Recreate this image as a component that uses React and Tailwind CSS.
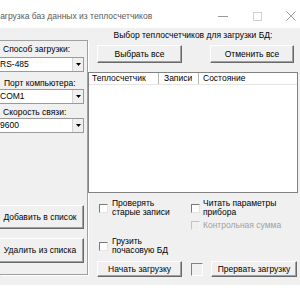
import React from "react";

const btn =
  "flex items-center justify-center bg-[#f0f0f0] border border-t-white border-l-white border-r-[#696969] border-b-[#696969] shadow-[inset_-1px_-1px_0_#a0a0a0] text-black";

function Combo({ value }) {
  return (
    <div className="w-[88px] -ml-[4px] h-[15px] flex bg-white border border-[#9a9a9a]">
      <div className="flex-1 flex items-center pl-[3px] leading-none">{value}</div>
      <div className="w-[11px] h-full flex items-center justify-center bg-[#f0f0f0] border-l border-[#d4d4d4]">
        <svg width="5" height="3" viewBox="0 0 5 3">
          <path d="M0 0H5L2.5 3Z" fill="#000" />
        </svg>
      </div>
    </div>
  );
}

function Check({ disabled }) {
  return (
    <div
      className={
        "w-[9px] h-[9px] shrink-0 border " +
        (disabled
          ? "bg-[#f0f0f0] border-t-[#c4c4c4] border-l-[#c4c4c4] border-r-[#f4f4f4] border-b-[#f4f4f4]"
          : "bg-white border-t-[#7a7a7a] border-l-[#7a7a7a] border-r-[#e4e4e4] border-b-[#e4e4e4]")
      }
    />
  );
}

export default function App() {
  return (
    <div className="w-[300px] h-[300px] overflow-hidden bg-white text-[8.5px] leading-none text-black font-['Liberation_Sans',Arial,sans-serif]">
      {/* title bar */}
      <div className="h-[28px] flex items-center pt-[4px]">
        <span className="-ml-[5px] text-[#5a5a5a] whitespace-nowrap">
          Загрузка баз данных из теплосчетчиков
        </span>
        <div className="ml-auto -mr-[8px] flex h-full items-center">
          <div className="w-[34px] flex justify-center">
            <svg width="10" height="1" viewBox="0 0 10 1">
              <rect width="10" height="1" fill="#9a9a9a" />
            </svg>
          </div>
          <div className="w-[34px] flex justify-center">
            <svg width="9" height="9" viewBox="0 0 9 9">
              <rect x="0.5" y="0.5" width="8" height="8" fill="none" stroke="#d0d0d0" />
            </svg>
          </div>
          <div className="w-[34px] flex justify-center">
            <svg width="10" height="10" viewBox="0 0 10 10">
              <path d="M0.5 0.5L9.5 9.5M9.5 0.5L0.5 9.5" stroke="#9a9a9a" strokeWidth="1" />
            </svg>
          </div>
        </div>
      </div>

      {/* body */}
      <div className="h-[257px] bg-[#f0f0f0] flex">
        {/* left panel */}
        <div className="mt-[12px] w-[88px] h-[235px] shrink-0 flex flex-col border-t border-r border-b border-[#a0a0a0] shadow-[1px_1px_0_#fff]">
          <div className="mt-[3px] h-[10px] leading-[10px] pl-[3px]">Способ загрузки:</div>
          <div className="mt-[3px]">
            <Combo value="RS-485" />
          </div>
          <div className="mt-[6px] h-[10px] leading-[10px] pl-[4px]">Порт компьютера:</div>
          <div className="mt-[1px]">
            <Combo value="COM1" />
          </div>
          <div className="mt-[3px] h-[10px] leading-[10px] pl-[3px]">Скорость связи:</div>
          <div className="mt-[1px]">
            <Combo value="9600" />
          </div>
          <div className={"mt-[72px] -ml-[4px] w-[88px] h-[24px] " + btn}>Добавить в список</div>
          <div className={"mt-[9px] -ml-[4px] w-[88px] h-[25px] " + btn}>Удалить из списка</div>
        </div>

        {/* right area */}
        <div className="flex-1 flex flex-col">
          <div className="mt-[2px] h-[10px] leading-[10px] text-center pr-[2px]">
            Выбор теплосчетчиков для загрузки БД:
          </div>
          <div className="mt-[5px] flex ml-[9px] gap-[28px]">
            <div className={"w-[85px] h-[18px] " + btn}>Выбрать все</div>
            <div className={"w-[84px] h-[18px] " + btn}>Отменить все</div>
          </div>

          {/* list view */}
          <div className="mt-[9px] w-[210px] h-[121px] bg-white border border-[#828282]">
            <div className="h-[12px] flex border-b border-[#e5e5e5]">
              <div className="w-[70px] pl-[3px] flex items-center border-r border-[#b4b4b4]">Теплосчетчик</div>
              <div className="w-[40px] pl-[5px] flex items-center border-r border-[#b4b4b4]">Записи</div>
              <div className="flex-1 pl-[4px] flex items-center">Состояние</div>
            </div>
          </div>

          {/* options */}
          <div className="mt-[6px] flex h-[18px] leading-[9px]">
            <div className="ml-[11px] w-[92px] flex items-center">
              <Check />
              <div className="ml-[4px]">
                Проверять
                <br />
                старые записи
              </div>
            </div>
            <div className="flex items-center">
              <Check />
              <div className="ml-[3px]">
                Читать параметры
                <br />
                прибора
              </div>
            </div>
          </div>
          <div className="mt-[4px] h-[9px] flex items-center ml-[103px]">
            <Check disabled />
            <div className="ml-[3px] text-[#a0a0a0]">Контрольная сумма</div>
          </div>
          <div className="mt-[7px] h-[18px] flex items-center ml-[11px] leading-[9px]">
            <Check />
            <div className="ml-[4px]">
              Грузить
              <br />
              почасовую БД
            </div>
          </div>
          <div className="mt-[6px] flex items-center">
            <div className={"ml-[9px] w-[85px] h-[16px] " + btn}>Начать загрузку</div>
            <div className="ml-[9px] w-[12px] h-[13px] border border-t-[#808080] border-l-[#808080] border-r-white border-b-white" />
            <div className={"ml-[8px] w-[86px] h-[16px] " + btn}>Прервать загрузку</div>
          </div>
        </div>
      </div>
    </div>
  );
}
